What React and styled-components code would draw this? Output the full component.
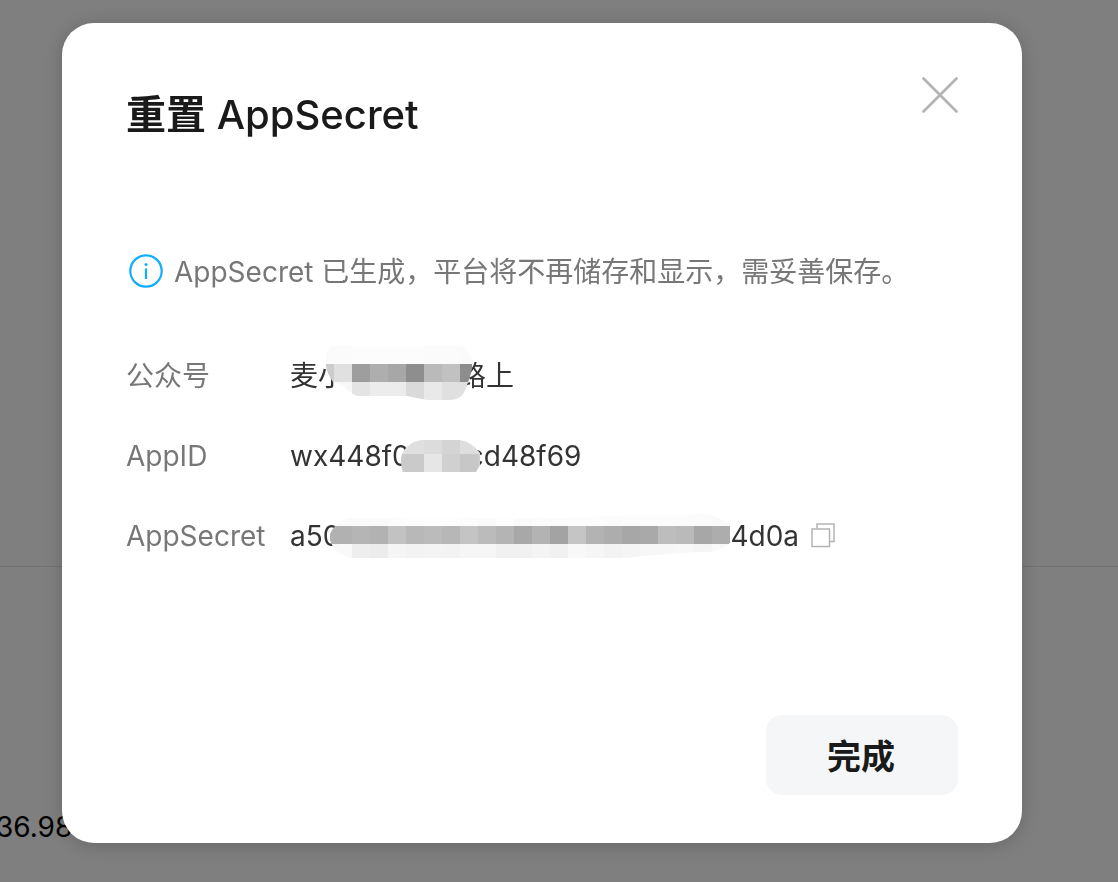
import React from "react";
import styled, {createGlobalStyle, css} from "styled-components";

const GlobalStyle = createGlobalStyle`
    * {
        box-sizing: border-box;
    }

    body {
        margin: 0;
        background: #fff;
        color: #000;
        font-family: Inter, "Noto Sans CJK SC", sans-serif;
        font-size: 28px;
        line-height: 40px;
    }
`;

const Page = styled.main`
    display: flex;
    flex-direction: column;
    min-height: 100vh;
`;

const PageSection = styled.section`
    height: 567px;
    border-bottom: 1px solid #e4e4e4;
`;

const PageFigure = styled.p`
    margin: 0;
    padding-top: 240px;
    text-indent: -4px;
`;

const Overlay = styled.div`
    position: fixed;
    inset: 0;
    padding: 23px 96px 39px 62px;
    background: rgba(0, 0, 0, 0.5);
    overflow: auto;
`;

const Dialog = styled.section`
    display: flex;
    flex-direction: column;
    min-height: 820px;
    padding: 48px 64px;
    border-radius: 32px;
    background: #fff;
    box-shadow: 0 2px 20px rgba(0, 0, 0, 0.2);
`;

const Header = styled.header`
    display: flex;
    align-items: flex-start;
    justify-content: space-between;
`;

const Title = styled.h1`
    margin: 16px 0 0;
    color: #1a1a1a;
    font-size: 40px;
    font-weight: 500;
    line-height: 56px;
`;

const Strong = styled.span`
    font-weight: 700;
`;

const IconButton = styled.button`
    display: flex;
    padding: 0;
    border: 0;
    background: none;
    cursor: pointer;

    ${props => props.$spaced && css`
        margin-left: 12px;
    `}
`;

const Notice = styled.p`
    display: flex;
    align-items: center;
    gap: 12px;
    margin: 109px 0 64px;
    color: #777;
`;

const Fields = styled.dl`
    display: grid;
    grid-template-columns: 164px 1fr;
    row-gap: 40px;
    margin: 0;
`;

const Label = styled.dt`
    color: #777;
`;

const Value = styled.dd`
    display: flex;
    align-items: center;
    height: 40px;
    margin: 0;
    color: #333;
`;

const MosaicSvg = styled.svg`
    flex: none;
    position: relative;
    margin: 0 ${props => props.$right}px 0 ${props => props.$left}px;
`;

const Footer = styled.footer`
    display: flex;
    justify-content: flex-end;
    margin-top: auto;
`;

const DoneButton = styled.button`
    width: 192px;
    height: 80px;
    padding: 4px 2px 0 0;
    border: 0;
    border-radius: 16px;
    background: #f5f6f8;
    color: #1a1a1a;
    font: inherit;
    font-size: 34px;
    font-weight: 700;
    cursor: pointer;
`;

const CELL = 18;

// Each row is a list of grey levels, one per cell
const nameMosaic = {
    id: "mosaic-name",
    box: [10, 0, 146, 60],
    outline: "M14 0H146Q154 6 157 17Q155 30 151 39Q149 47 144 51Q140 54 134 54H111L91 50H41Q33 47 27 39L17 36Q11 28 10 20Q9 8 14 0Z",
    rows: [
        [251, 251, 252, 252, 252, 252, 251, 251, 250],
        [204, 224, 158, 174, 167, 142, 186, 193, 141],
        [250, 247, 228, 236, 236, 218, 233, 224, 224]
    ]
};

const idMosaic = {
    id: "mosaic-id",
    box: [13, 4, 80, 32],
    outline: "M13 24Q13 18 17 13Q25 4 35 4H72Q84 6 92 17V29L88 36H15Q13 32 13 24Z",
    rows: [
        [224, 224, 220, 212, 222, 222],
        [203, 202, 230, 208, 199, 205]
    ]
};

const secretMosaic = {
    id: "mosaic-secret",
    box: [14, 6, 402, 44],
    outline: "M14 26Q20 12 36 10H250Q330 6 386 6Q408 8 415 20V34Q406 44 388 44Q350 45 310 50H36Q18 46 14 32Z",
    rows: [
        [250, 250, 250, 250, 252, 253, 253, 253, 252, 250, 253, 250, 252, 250, 252, 252, 251, 252, 252, 252, 252, 251, 250],
        [178, 177, 181, 178, 194, 184, 187, 183, 196, 187, 180, 168, 179, 163, 197, 179, 173, 167, 169, 189, 186, 167, 173],
        [250, 249, 238, 236, 245, 243, 244, 243, 246, 246, 241, 241, 244, 241, 248, 246, 243, 245, 247, 247, 248, 245, 249]
    ]
};

function Mosaic({data, left, right}) {
    const [, , width, height] = data.box;

    return (
        <MosaicSvg width={width} height={height} viewBox={data.box.join(" ")} $left={left} $right={right} aria-hidden="true">
            <clipPath id={data.id}>
                <path d={data.outline} />
            </clipPath>
            <g clipPath={`url(#${data.id})`} shapeRendering="crispEdges">
                {data.rows.map((row, y) => row.map((grey, x) => (
                    <rect
                        key={`${x}-${y}`}
                        x={x * CELL}
                        y={y * CELL}
                        width={CELL}
                        height={CELL}
                        fill={`rgb(${grey}, ${grey}, ${grey})`}
                    />
                )))}
            </g>
        </MosaicSvg>
    );
}

function CloseIcon() {
    return (
        <svg width="36" height="48" viewBox="0 0 36 48" stroke="#b2b4b5" strokeWidth="2.7" strokeLinecap="round">
            <path d="M1.5 7.5l33 33M34.5 7.5l-33 33" />
        </svg>
    );
}

function InfoIcon() {
    return (
        <svg width="36" height="36" viewBox="0 0 36 36" fill="none" stroke="#10aeff" strokeWidth="2.2" overflow="visible">
            <circle cx="20" cy="17" r="15.7" />
            <path d="M20 14.5v10.5" />
            <circle cx="20" cy="10.5" r="1.5" fill="#10aeff" stroke="none" />
        </svg>
    );
}

function CopyIcon() {
    return (
        <svg width="24" height="26" viewBox="0 0 24 26" fill="none" stroke="#b4b4b4" strokeWidth="1.5">
            <path d="M6 5.5V1h17v17.500h-4.500" />
            <rect x="1" y="6" width="17.500" height="17.500" />
        </svg>
    );
}

export default function App() {
    return (
        <>
            <GlobalStyle />
            <Page>
                <PageSection />
                <PageFigure>36.98</PageFigure>
            </Page>
            <Overlay>
                <Dialog role="dialog" aria-modal="true" aria-labelledby="title">
                    <Header>
                        <Title id="title"><Strong>重置</Strong> AppSecret</Title>
                        <IconButton type="button" aria-label="关闭">
                            <CloseIcon />
                        </IconButton>
                    </Header>
                    <Notice>
                        <InfoIcon />
                        AppSecret 已生成，平台将不再储存和显示，需妥善保存。
                    </Notice>
                    <Fields>
                        <Label>公众号</Label>
                        <Value>
                            <span>麦小</span>
                            <Mosaic data={nameMosaic} left={-20} right={-14} />
                            <span>路上</span>
                        </Value>
                        <Label>AppID</Label>
                        <Value>
                            <span>wx448f0</span>
                            <Mosaic data={idMosaic} left={-9} right={-13} />
                            <span>cd48f69</span>
                        </Value>
                        <Label>AppSecret</Label>
                        <Value>
                            <span>a50</span>
                            <Mosaic data={secretMosaic} left={-10} right={-2} />
                            <span>4d0a</span>
                            <IconButton type="button" aria-label="复制" $spaced>
                                <CopyIcon />
                            </IconButton>
                        </Value>
                    </Fields>
                    <Footer>
                        <DoneButton type="button">完成</DoneButton>
                    </Footer>
                </Dialog>
            </Overlay>
        </>
    );
}
